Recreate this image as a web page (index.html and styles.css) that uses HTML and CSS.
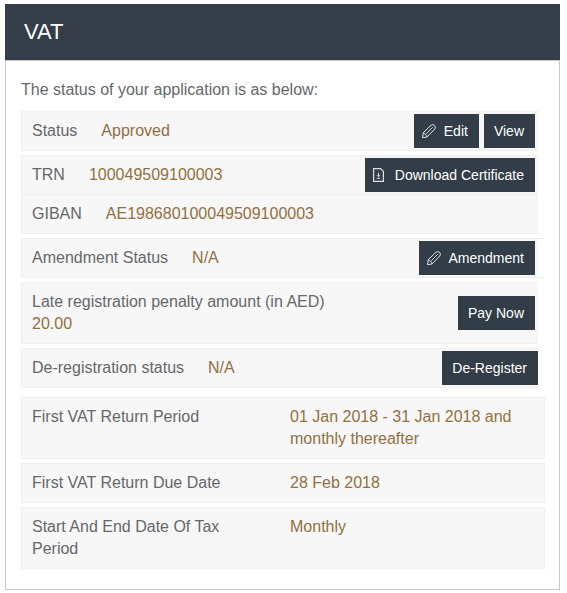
FILE: index.html
```html
<!DOCTYPE html>
<html lang="en">
<head>
<meta charset="utf-8">
<title>VAT</title>
<meta name="viewport" content="width=device-width, initial-scale=1">
<link rel="stylesheet" href="styles.css">
</head>
<body>
<svg class="sprite" aria-hidden="true">
  <symbol id="pencil" viewBox="0 0 14 14">
    <g fill="none" stroke="currentColor" stroke-linejoin="round" stroke-linecap="round">
      <path d="M0.6 13.4 1.3 8.7 9 1.2Q10.8 -0.1 12.6 1.4 14.1 3.2 12.8 5L5.3 12.7Z"/>
      <path d="M1.3 8.7Q3 8.8 3.3 10.7 5.2 11 5.3 12.7M4.4 9.6 10.4 3.6" stroke-width="0.9"/>
    </g>
  </symbol>
  <symbol id="download" viewBox="0 0 14 14">
    <path d="M0.6 0.6H7.6L10.4 3.4V13.4H0.6Z" fill="none" stroke="currentColor" stroke-width="1.2"/>
    <path d="M5.5 4.8V8.4M3.9 7.2 5.5 8.8 7.1 7.2M3.8 10.3H7.2" fill="none" stroke="currentColor" stroke-width="1"/>
  </symbol>
</svg>
<main class="card">
  <h1 class="card-title">VAT</h1>
  <div class="card-body">
    <p class="intro">The status of your application is as below:</p>
    <section class="status">
      <div class="row">
        <p class="info"><span class="label">Status</span><span class="value">Approved</span></p>
        <div class="actions">
          <button class="btn btn-icon" type="button"><svg class="icon" aria-hidden="true"><use href="#pencil"/></svg>Edit</button>
          <button class="btn" type="button">View</button>
        </div>
      </div>
      <div class="row">
        <p class="info"><span class="label">TRN</span><span class="value">100049509100003</span></p>
        <div class="actions">
          <button class="btn btn-icon" type="button"><svg class="icon" aria-hidden="true"><use href="#download"/></svg>Download Certificate</button>
        </div>
      </div>
      <div class="row row-joined">
        <p class="info"><span class="label">GIBAN</span><span class="value">AE198680100049509100003</span></p>
      </div>
      <div class="row row-wide">
        <p class="info"><span class="label">Amendment Status</span><span class="value">N/A</span></p>
        <div class="actions">
          <button class="btn btn-icon" type="button"><svg class="icon" aria-hidden="true"><use href="#pencil"/></svg>Amendment</button>
        </div>
      </div>
      <div class="row">
        <p class="info info-stacked"><span class="label">Late registration penalty amount (in AED)</span><span class="value">20.00</span></p>
        <div class="actions">
          <button class="btn" type="button">Pay Now</button>
        </div>
      </div>
      <div class="row">
        <p class="info"><span class="label">De-registration status</span><span class="value">N/A</span></p>
        <div class="actions actions-flush">
          <button class="btn" type="button">De-Register</button>
        </div>
      </div>
    </section>
    <dl class="periods">
      <div class="period">
        <dt class="label">First VAT Return Period</dt>
        <dd class="value">01 Jan 2018 - 31 Jan 2018 and monthly thereafter</dd>
      </div>
      <div class="period">
        <dt class="label">First VAT Return Due Date</dt>
        <dd class="value">28 Feb 2018</dd>
      </div>
      <div class="period">
        <dt class="label">Start And End Date Of Tax Period</dt>
        <dd class="value">Monthly</dd>
      </div>
    </dl>
  </div>
</main>
</body>
</html>
```
FILE: styles.css
```css
* {
  box-sizing: border-box;
}

body {
  margin: 4px 7px 3px 5px;
  background: #fff;
  font-family: "Liberation Sans", Arial, sans-serif;
  font-size: 16px;
  line-height: 22px;
  color: #66676a;
}

p,
h1,
dl,
dd {
  margin: 0;
}

.sprite {
  position: absolute;
  width: 0;
  height: 0;
}

.card-title {
  padding: 16px 19px;
  background: #353d49;
  color: #fff;
  font-size: 22px;
  font-weight: 400;
  line-height: 24px;
}

.card-body {
  padding: 18px 14px 20px 15px;
  border: 1px solid #c8c8ca;
}

.intro {
  margin-bottom: 10px;
}

.status {
  display: grid;
  gap: 4px;
  margin-right: 7px;
}

.row {
  display: flex;
  align-items: center;
  justify-content: space-between;
  border: 1px solid #efeff1;
  border-right: 0;
  background: #f7f7f8;
}

.row-joined {
  margin-top: -5px;
}

.row-wide {
  margin-right: -6px;
  padding-right: 6px;
  background: linear-gradient(#f7f7f8, #f7f7f8) no-repeat left / calc(100% - 6px) 100%;
}

.info {
  display: flex;
  gap: 24px;
  padding: 8px 10px;
}

.info-stacked {
  flex-direction: column;
  gap: 0;
}

.value {
  color: #92703f;
}

.actions {
  display: flex;
  gap: 5px;
  margin-right: 3px;
}

.actions-flush {
  margin-right: 0;
}

.btn {
  display: flex;
  align-items: center;
  gap: 8px;
  height: 34px;
  padding: 0 11px 0 10px;
  border: 0;
  background: #333d48;
  color: #fff;
  font: inherit;
  font-size: 14px;
  white-space: nowrap;
  cursor: pointer;
}

.btn-icon {
  padding-left: 8px;
}

.icon {
  width: 14px;
  height: 14px;
  color: #dfe2e5;
}

.periods {
  display: grid;
  gap: 4px;
  margin-top: 9px;
}

.period {
  display: grid;
  grid-template-columns: 1fr 1fr;
  gap: 14px;
  padding: 8px 10px;
  border: 1px solid #efeff1;
  background: #f7f7f8;
}

.period .label {
  padding-right: 24px;
}
```
